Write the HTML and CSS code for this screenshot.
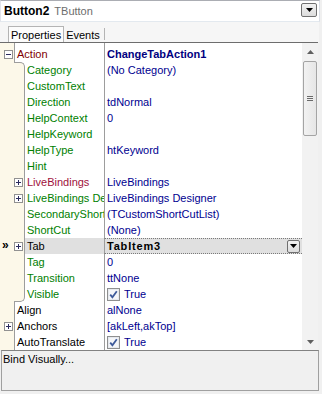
FILE: index.html
```html
<!DOCTYPE html>
<html>

<head>
    <meta charset="UTF-8">
    <meta name="viewport" content="width=device-width, initial-scale=1.0">
    <link rel="stylesheet" href="styles.css">
    <title>Object Inspector</title>
</head>

<body>

    <div class="inspector">

        <div class="combo">
            <span class="cname">Button2</span>
            <span class="ctype">TButton</span>
            <span class="combo-btn">
                <svg width="7" height="4" viewBox="0 0 7 4"><path d="M0 0h7L3.5 4z" fill="#000"/></svg>
            </span>
        </div>

        <div class="tabs">
            <span class="tab active">Properties</span>
            <span class="tab">Events</span>
        </div>

        <div class="grid-wrap">
            <div class="grid">
                <div class="row spacer"><span class="gut"></span><span class="name"></span><span class="val"></span></div>

                <!-- Action and its sub properties -->
                <div class="row">
                    <span class="gut">
                        <svg class="box" width="9" height="9" viewBox="0 0 9 9"><rect x="0.5" y="0.5" width="8" height="8" fill="#fff" stroke="#919191"/><path d="M2 4.5h5" stroke="#2b2b5e"/></svg>
                    </span>
                    <span class="name ref">Action</span>
                    <span class="val"><b>ChangeTabAction1</b></span>
                </div>
                <div class="row sub">
                    <span class="gut"><span class="g1"></span><span class="g2 first"></span></span>
                    <span class="name green">Category</span>
                    <span class="val">(No Category)</span>
                </div>
                <div class="row sub">
                    <span class="gut"><span class="g1"></span><span class="g2"></span></span>
                    <span class="name green">CustomText</span>
                    <span class="val"></span>
                </div>
                <div class="row sub">
                    <span class="gut"><span class="g1"></span><span class="g2"></span></span>
                    <span class="name green">Direction</span>
                    <span class="val">tdNormal</span>
                </div>
                <div class="row sub">
                    <span class="gut"><span class="g1"></span><span class="g2"></span></span>
                    <span class="name green">HelpContext</span>
                    <span class="val">0</span>
                </div>
                <div class="row sub">
                    <span class="gut"><span class="g1"></span><span class="g2"></span></span>
                    <span class="name green">HelpKeyword</span>
                    <span class="val"></span>
                </div>
                <div class="row sub">
                    <span class="gut"><span class="g1"></span><span class="g2"></span></span>
                    <span class="name green">HelpType</span>
                    <span class="val">htKeyword</span>
                </div>
                <div class="row sub">
                    <span class="gut"><span class="g1"></span><span class="g2"></span></span>
                    <span class="name green">Hint</span>
                    <span class="val"></span>
                </div>
                <div class="row sub">
                    <span class="gut"><span class="g1"></span><span class="g2">
                        <svg class="box" width="9" height="9" viewBox="0 0 9 9"><rect x="0.5" y="0.5" width="8" height="8" fill="#fff" stroke="#919191"/><path d="M2 4.5h5M4.5 2v5" stroke="#2b2b5e"/></svg>
                    </span></span>
                    <span class="name bind">LiveBindings</span>
                    <span class="val">LiveBindings</span>
                </div>
                <div class="row sub">
                    <span class="gut"><span class="g1"></span><span class="g2">
                        <svg class="box" width="9" height="9" viewBox="0 0 9 9"><rect x="0.5" y="0.5" width="8" height="8" fill="#fff" stroke="#919191"/><path d="M2 4.5h5M4.5 2v5" stroke="#2b2b5e"/></svg>
                    </span></span>
                    <span class="name green">LiveBindings Des</span>
                    <span class="val">LiveBindings Designer</span>
                </div>
                <div class="row sub">
                    <span class="gut"><span class="g1"></span><span class="g2"></span></span>
                    <span class="name green">SecondaryShort</span>
                    <span class="val">(TCustomShortCutList)</span>
                </div>
                <div class="row sub">
                    <span class="gut"><span class="g1"></span><span class="g2"></span></span>
                    <span class="name green">ShortCut</span>
                    <span class="val">(None)</span>
                </div>
                <div class="row sub selected">
                    <span class="gut"><span class="g1"><span class="marker">&raquo;</span></span><span class="g2">
                        <svg class="box" width="9" height="9" viewBox="0 0 9 9"><rect x="0.5" y="0.5" width="8" height="8" fill="#fff" stroke="#919191"/><path d="M2 4.5h5M4.5 2v5" stroke="#2b2b5e"/></svg>
                    </span></span>
                    <span class="name">Tab</span>
                    <span class="val">
                        <b>TabItem3</b>
                        <span class="drop-btn">
                            <svg width="7" height="4" viewBox="0 0 7 4"><path d="M0 0h7L3.5 4z" fill="#000"/></svg>
                        </span>
                    </span>
                </div>
                <div class="row sub">
                    <span class="gut"><span class="g1"></span><span class="g2"></span></span>
                    <span class="name green">Tag</span>
                    <span class="val">0</span>
                </div>
                <div class="row sub">
                    <span class="gut"><span class="g1"></span><span class="g2"></span></span>
                    <span class="name green">Transition</span>
                    <span class="val">ttNone</span>
                </div>
                <div class="row sub">
                    <span class="gut"><span class="g1"></span><span class="g2 last"></span></span>
                    <span class="name green">Visible</span>
                    <span class="val">
                        <svg class="check" width="13" height="13" viewBox="0 0 13 13"><rect x="0.5" y="0.5" width="12" height="12" fill="#e6e9ee" stroke="#8e8f8f"/><rect x="2" y="2" width="9" height="9" fill="#f4f6f9"/><path d="M3.2 6.6l2.2 2.6 4.4-6" fill="none" stroke="#3d5a9a" stroke-width="1.8"/></svg>
                        True
                    </span>
                </div>

                <!-- top level properties -->
                <div class="row">
                    <span class="gut"></span>
                    <span class="name">Align</span>
                    <span class="val">alNone</span>
                </div>
                <div class="row">
                    <span class="gut">
                        <svg class="box" width="9" height="9" viewBox="0 0 9 9"><rect x="0.5" y="0.5" width="8" height="8" fill="#fff" stroke="#919191"/><path d="M2 4.5h5M4.5 2v5" stroke="#2b2b5e"/></svg>
                    </span>
                    <span class="name">Anchors</span>
                    <span class="val">[akLeft,akTop]</span>
                </div>
                <div class="row">
                    <span class="gut"></span>
                    <span class="name">AutoTranslate</span>
                    <span class="val">
                        <svg class="check" width="13" height="13" viewBox="0 0 13 13"><rect x="0.5" y="0.5" width="12" height="12" fill="#e6e9ee" stroke="#8e8f8f"/><rect x="2" y="2" width="9" height="9" fill="#f4f6f9"/><path d="M3.2 6.6l2.2 2.6 4.4-6" fill="none" stroke="#3d5a9a" stroke-width="1.8"/></svg>
                        True
                    </span>
                </div>
            </div>

            <div class="vscroll">
                <div class="sb-btn">
                    <svg width="7" height="4" viewBox="0 0 7 4"><path d="M0 4h7L3.5 0z" fill="#606060"/></svg>
                </div>
                <div class="thumb"><span class="grip"></span></div>
                <div class="track"></div>
                <div class="sb-btn">
                    <svg width="7" height="4" viewBox="0 0 7 4"><path d="M0 0h7L3.5 4z" fill="#606060"/></svg>
                </div>
            </div>
        </div>

        <div class="hint">Bind Visually...</div>

    </div>

</body>

</html>
```

FILE: styles.css
```css
body {
    margin: 0;
    padding: 0;
    background-color: #f0f0f0;
    font-family: "Liberation Sans", Arial, sans-serif;
    font-size: 11px;
}

.inspector {
    width: 319px;
}

.combo {
    height: 22px;
    box-sizing: border-box;
    border: 1px solid;
    border-color: #abadb3 #dbdfe6 #e3e9ef #e2e3ea;
    background-color: #fff;
    display: flex;
    align-items: center;
    padding-left: 3px;
    padding-right: 2px;
    width: 320px;
}

.cname {
    font-weight: bold;
    font-size: 12px;
    color: #000;
}

.ctype {
    color: #6d6d6d;
    margin-left: 5px;
    flex: 1;
}

.combo-btn {
    width: 16px;
    height: 14px;
    box-sizing: border-box;
    border: 1px solid #707070;
    border-radius: 2px;
    background: linear-gradient(#f2f2f2, #dcdcdc);
    display: flex;
    align-items: center;
    justify-content: center;
    margin-top: -2px;
}

.tabs {
    height: 20px;
    background-color: #f6f6f6;
    display: flex;
    align-items: flex-end;
    padding-left: 8px;
}

.tab {
    height: 16px;
    line-height: 16px;
    padding: 0 4px 0 2px;
    color: #000;
}

.tab.active {
    background-color: #fcfcfc;
    border: 1px solid #b4b4b4;
    border-bottom: none;
    height: 15px;
    padding: 0 2px 0 2px;
}

.tab + .tab {
    border-right: 1px solid #b4b4b4;
    height: 10px;
    line-height: 10px;
    margin-bottom: 2px;
    padding-top: 2px;
}

.grid-wrap {
    border-top: 1px solid #6d6d6d;
    display: flex;
    width: 318px;
}

.grid {
    flex: 1;
    background-color: #fff;
}

.row {
    display: flex;
    height: 16px;
    line-height: 16px;
}

.row.spacer {
    height: 3px;
}

.gut {
    width: 15px;
    flex: 0 0 15px;
    box-sizing: border-box;
    background-color: #fcf8e9;
    border-right: 1px solid #9d9d9d;
    display: flex;
    align-items: center;
}

.gut .box {
    margin-left: 4px;
}

.row.sub .gut {
    width: 25px;
    flex: 0 0 25px;
    border-right: none;
    background-color: transparent;
}

.g1 {
    width: 14px;
    height: 16px;
    background-color: #fcf8e9;
    display: flex;
    align-items: center;
}

.g2 {
    width: 11px;
    height: 16px;
    box-sizing: border-box;
    background-color: #fcf8e9;
    border-right: 1px solid #9d9d9d;
    display: flex;
    align-items: center;
}

.g2 .box {
    margin-left: 0;
}

.g2.first {
    border-top: 1px solid #9d9d9d;
    border-top-right-radius: 5px;
}

.g2.last {
    border-bottom: 1px solid #9d9d9d;
    border-bottom-right-radius: 5px;
}

.marker {
    font-weight: bold;
    font-size: 12px;
    margin-left: 2px;
    margin-top: -2px;
}

.name {
    width: 89px;
    flex: 0 0 89px;
    box-sizing: border-box;
    padding-left: 2px;
    white-space: nowrap;
    overflow: hidden;
    color: #000;
}

.row.sub .name {
    width: 79px;
    flex: 0 0 79px;
}

.name.ref {
    color: #800000;
}

.name.bind {
    color: #a0103c;
}

.name.green {
    color: #008000;
}

.val {
    flex: 1;
    border-left: 1px solid #9d9d9d;
    padding-left: 2px;
    color: #000090;
    white-space: nowrap;
    overflow: hidden;
    display: flex;
    align-items: center;
}

.val b {
    color: #000080;
}

.check {
    margin-right: 4px;
}

.row.selected .name,
.row.selected .val {
    background-color: #e0e0e0;
}

.row.selected .val {
    border-top: 1px dotted #7a7a7a;
    border-bottom: 1px dotted #7a7a7a;
    box-sizing: border-box;
    color: #000;
    justify-content: space-between;
    padding-right: 2px;
}

.row.selected .val b {
    color: #000;
    letter-spacing: 0.8px;
}

.drop-btn {
    width: 13px;
    height: 13px;
    box-sizing: border-box;
    border: 1px solid #707070;
    border-radius: 2px;
    background: linear-gradient(#f2f2f2, #dcdcdc);
    display: flex;
    align-items: center;
    justify-content: center;
}

.vscroll {
    width: 16px;
    flex: 0 0 16px;
    background-color: #f2f2f2;
    display: flex;
    flex-direction: column;
}

.sb-btn {
    height: 17px;
    display: flex;
    align-items: center;
    justify-content: center;
}

.thumb {
    height: 75px;
    margin: 1px 1px 0 1px;
    box-sizing: border-box;
    border: 1px solid #a4a4a4;
    border-radius: 2px;
    background: linear-gradient(to right, #f2f2f2, #e6e6e6);
    display: flex;
    align-items: center;
    justify-content: center;
}

.grip {
    width: 6px;
    height: 5px;
    border-top: 1px solid #6a6a6a;
    border-bottom: 1px solid #6a6a6a;
    background: linear-gradient(#f0f0f0 0 1px, #6a6a6a 1px 2px, #f0f0f0 2px) center / 6px 3px no-repeat;
    box-sizing: border-box;
}

.track {
    flex: 1;
}

.hint {
    height: 41px;
    box-sizing: border-box;
    border: 1px solid #a0a0a0;
    border-top-color: #828282;
    margin-left: 1px;
    padding: 2px 1px;
    color: #000;
    width: 318px;
}
```
